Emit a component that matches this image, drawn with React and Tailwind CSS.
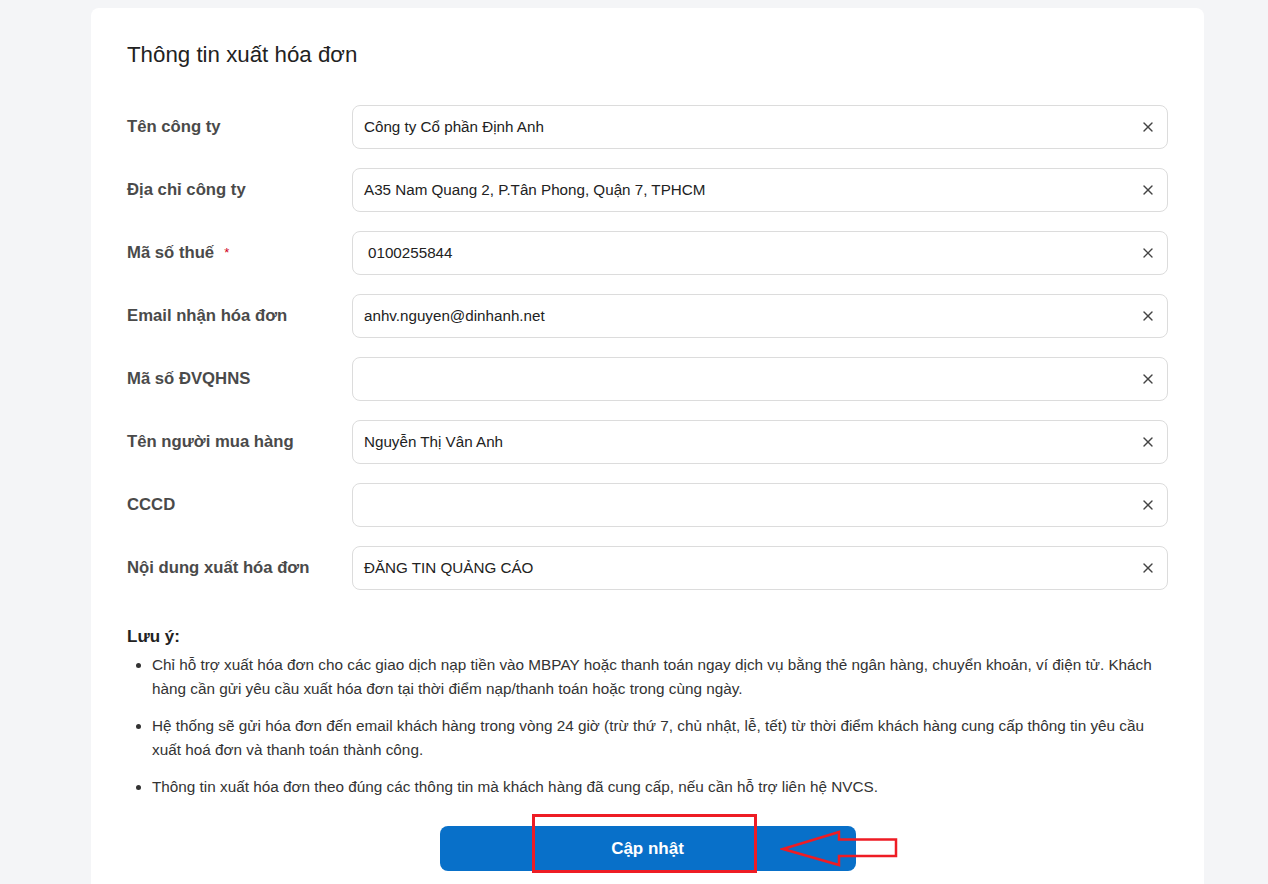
import React from "react";
import { X } from "lucide-react";

const rows = [
  { label: "Tên công ty", value: "Công ty Cổ phần Định Anh" },
  { label: "Địa chỉ công ty", value: "A35 Nam Quang 2, P.Tân Phong, Quận 7, TPHCM" },
  { label: "Mã số thuế", value: "0100255844", required: true, indent: true },
  { label: "Email nhận hóa đơn", value: "anhv.nguyen@dinhanh.net" },
  { label: "Mã số ĐVQHNS", value: "" },
  { label: "Tên người mua hàng", value: "Nguyễn Thị Vân Anh" },
  { label: "CCCD", value: "" },
  { label: "Nội dung xuất hóa đơn", value: "ĐĂNG TIN QUẢNG CÁO" },
];

export default function App() {
  return (
    <div
      className="min-h-screen bg-[#f4f5f7] pt-[8px]"
      style={{ fontFamily: '"Liberation Sans", Arial, sans-serif' }}
    >
      <div className="ml-[91px] w-[1113px] rounded-[8px] bg-white px-[36px] pt-[32px] pb-[40px]">
        <h1 className="h-[30px] text-[22.3px] leading-[30px] text-[#222]">Thông tin xuất hóa đơn</h1>
        <div className="mt-[35px] flex flex-col gap-[19px]">
          {rows.map((r) => (
            <div key={r.label} className="flex items-center">
              <div className="flex w-[225px] items-center text-[16.7px] font-bold text-[#4a4a4a]">
                <span>{r.label}</span>
                {r.required && <span className="ml-[10px] text-[13px] font-normal text-[#d0021b]">*</span>}
              </div>
              <div className="flex h-[44px] flex-1 items-center rounded-[8px] border border-[#dcdcdc] pl-[11px] pr-[11px]">
                <span className={"flex-1 text-[15.2px] text-[#222] " + (r.indent ? "pl-[4px]" : "")}>{r.value}</span>
                <X size={16} strokeWidth={2} className="text-[#444]" />
              </div>
            </div>
          ))}
        </div>
        <div className="mt-[35px] text-[17px] font-bold leading-[24px] text-[#222]">Lưu ý:</div>
        <ul className="mt-[4px] flex list-disc flex-col gap-[13px] pl-[25px] text-[15.3px] leading-[24px] text-[#333]">
          <li>
            Chỉ hỗ trợ xuất hóa đơn cho các giao dịch nạp tiền vào MBPAY hoặc thanh toán ngay dịch vụ bằng thẻ ngân hàng, chuyển khoản, ví điện tử. Khách hàng cần gửi yêu cầu xuất hóa đơn tại thời điểm nạp/thanh toán hoặc trong cùng ngày.
          </li>
          <li>
            Hệ thống sẽ gửi hóa đơn đến email khách hàng trong vòng 24 giờ (trừ thứ 7, chủ nhật, lễ, tết) từ thời điểm khách hàng cung cấp thông tin yêu cầu xuất hoá đơn và thanh toán thành công.
          </li>
          <li>
            Thông tin xuất hóa đơn theo đúng các thông tin mà khách hàng đã cung cấp, nếu cần hỗ trợ liên hệ NVCS.
          </li>
        </ul>
        <div className="mt-[27px] flex justify-center">
          <div className="relative">
            <button className="h-[45px] w-[416px] rounded-[8px] bg-[#0870c9] text-[17px] font-bold text-white">
              Cập nhật
            </button>
            <div className="pointer-events-none absolute left-[92px] top-[-12px] h-[59px] w-[225px] border-[3px] border-[#ee1c24]" />
            <svg
              className="pointer-events-none absolute left-[340px] top-[3px]"
              width="120"
              height="40"
              viewBox="0 0 120 40"
            >
              <polygon
                points="3,20 59,3 59,10.5 116,10.5 116,27 59,27 59,36"
                fill="none"
                stroke="#ee1c24"
                strokeWidth="2.5"
              />
            </svg>
          </div>
        </div>
      </div>
    </div>
  );
}
